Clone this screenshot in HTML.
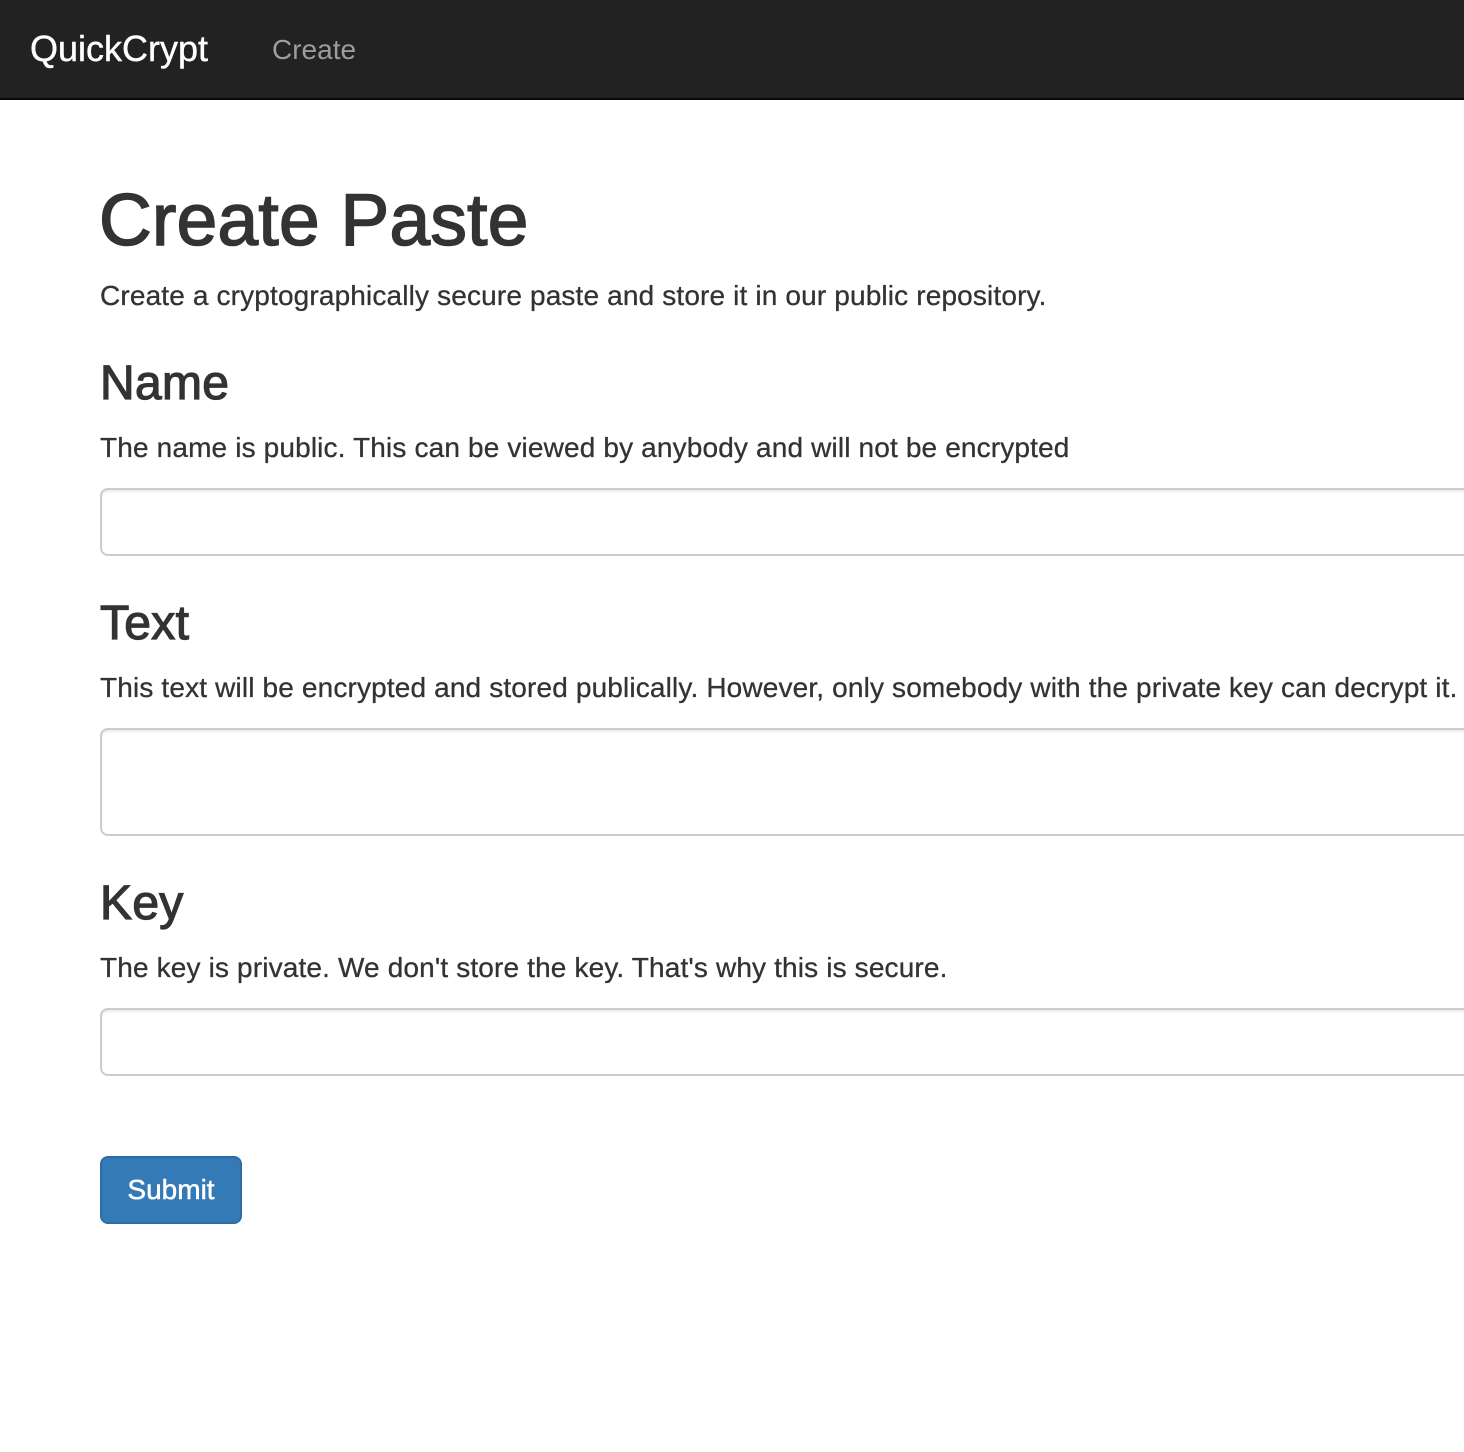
<!DOCTYPE html>
<html><head><meta charset="utf-8"><style>
html,body{margin:0;padding:0;width:1464px;height:1452px;overflow:hidden;background:#fff;font-family:"Liberation Sans",Arial,sans-serif;color:#333}
.a{position:absolute;line-height:1;white-space:nowrap;margin:0}
.nav{position:absolute;left:0;top:0;width:1464px;height:98px;background:#222;border-bottom:2px solid #080808}
.h3{font-size:48px;font-weight:500;left:100px;-webkit-text-stroke:1.2px #333;letter-spacing:0.3px}
.p{font-size:28px;left:100px;letter-spacing:0.15px;-webkit-text-stroke:0.3px #333}
.in{position:absolute;left:100px;width:1420px;border:2px solid #ccc;border-radius:8px;box-sizing:border-box;background:#fff;box-shadow:inset 0 2px 2px rgba(0,0,0,.075)}
.btn{position:absolute;left:100px;top:1156px;width:142px;height:68px;box-sizing:border-box;background:#337ab7;border:2px solid #2e6da4;border-radius:8px;color:#fff;font-size:28px;line-height:64px;text-align:center;-webkit-text-stroke:0.5px #fff}
</style></head><body>
<div class="nav"></div>
<div class="a" style="left:30px;top:31px;font-size:36px;color:#fff;-webkit-text-stroke:0.4px #fff">QuickCrypt</div>
<div class="a" style="left:272px;top:36px;font-size:28px;color:#9d9d9d">Create</div>
<div class="a" style="left:99px;top:184px;font-size:73px;font-weight:500;-webkit-text-stroke:1.6px #333;letter-spacing:0.3px">Create Paste</div>
<div class="a p" style="top:282px">Create a cryptographically secure paste and store it in our public repository.</div>
<div class="a h3" style="top:360px">Name</div>
<div class="a p" style="top:434px">The name is public. This can be viewed by anybody and will not be encrypted</div>
<div class="in" style="top:488px;height:68px"></div>
<div class="a h3" style="top:600px">Text</div>
<div class="a p" style="top:674px">This text will be encrypted and stored publically. However, only somebody with the private key can decrypt it.</div>
<div class="in" style="top:728px;height:108px"></div>
<div class="a h3" style="top:880px">Key</div>
<div class="a p" style="top:954px">The key is private. We don't store the key. That's why this is secure.</div>
<div class="in" style="top:1008px;height:68px"></div>
<div class="btn">Submit</div>
</body></html>
